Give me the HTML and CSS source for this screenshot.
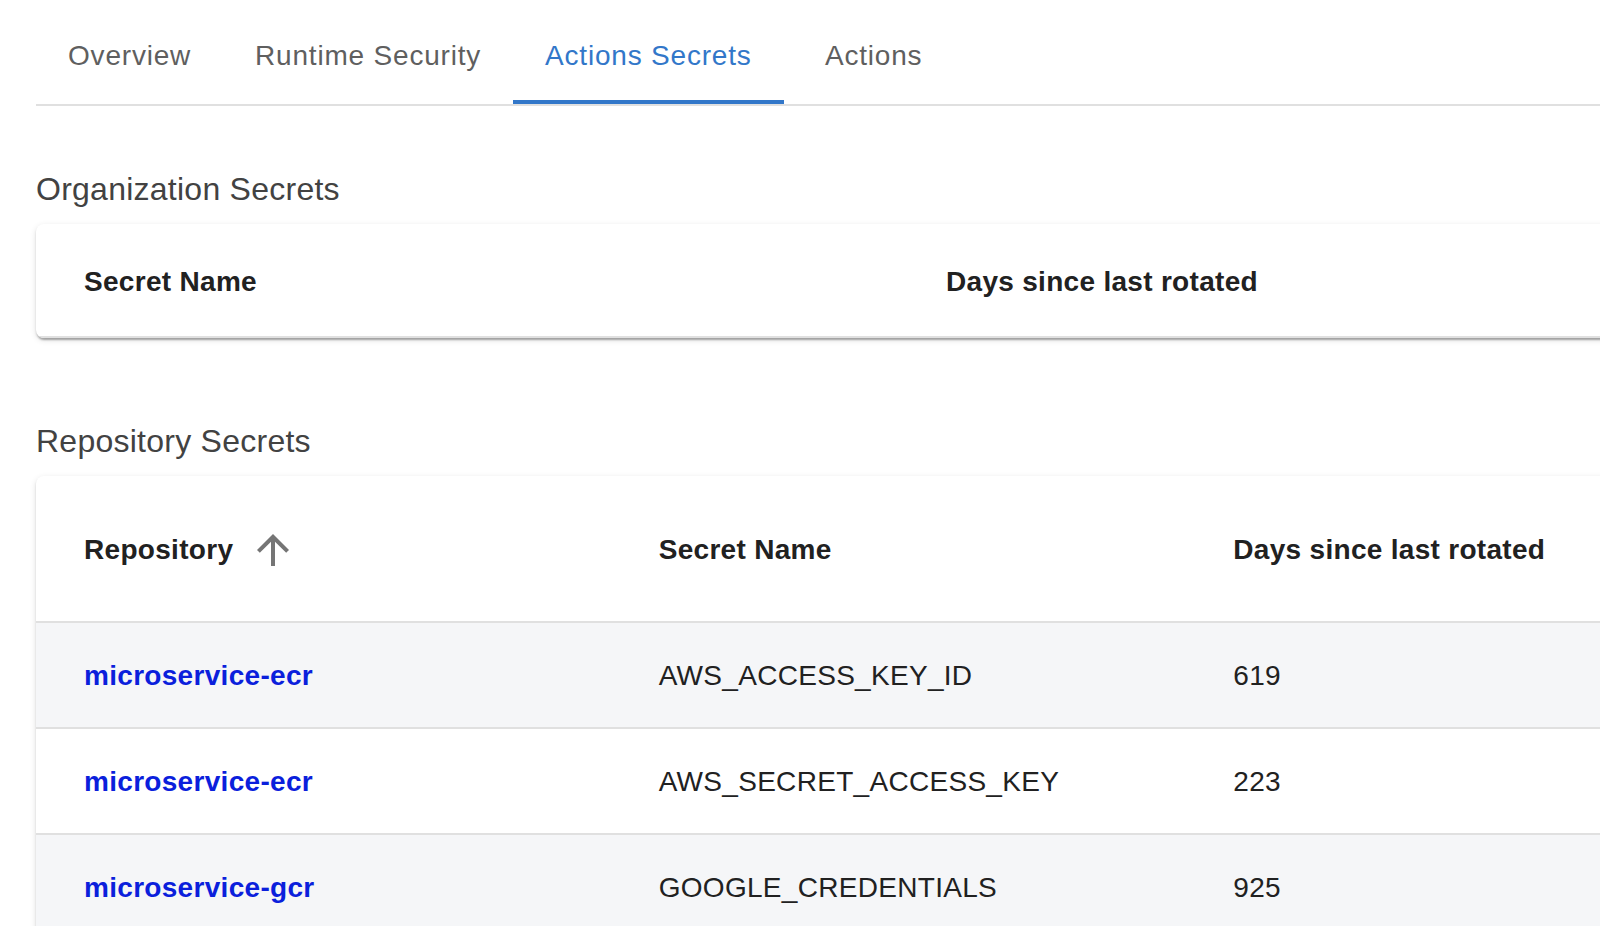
FILE: index.html
```html
<!DOCTYPE html>
<html lang="en">
<head>
<meta charset="utf-8">
<title>Actions Secrets</title>
<link rel="stylesheet" href="styles.css">
</head>
<body>
<div class="page">
  <nav class="tabs">
    <div class="tab">Overview</div>
    <div class="tab">Runtime Security</div>
    <div class="tab active">Actions Secrets</div>
    <div class="tab">Actions</div>
  </nav>

  <h2 class="section-title first">Organization Secrets</h2>
  <div class="paper">
    <div class="table cols-2">
      <div class="cell head org-head">Secret Name</div>
      <div class="cell head org-head">Days since last rotated</div>
    </div>
  </div>

  <h2 class="section-title">Repository Secrets</h2>
  <div class="paper">
    <div class="table cols-3">
      <div class="cell head repo-head">Repository
        <svg class="sort-icon" viewBox="0 0 24 24" aria-hidden="true"><path d="M4 12l1.41 1.41L11 7.83V20h2V7.83l5.58 5.59L20 12l-8-8-8 8z"/></svg>
      </div>
      <div class="cell head repo-head">Secret Name</div>
      <div class="cell head repo-head">Days since last rotated</div>

      <div class="cell body striped"><a class="repo-link" href="#">microservice-ecr</a></div>
      <div class="cell body striped">AWS_ACCESS_KEY_ID</div>
      <div class="cell body striped">619</div>

      <div class="cell body"><a class="repo-link" href="#">microservice-ecr</a></div>
      <div class="cell body">AWS_SECRET_ACCESS_KEY</div>
      <div class="cell body">223</div>

      <div class="cell body striped"><a class="repo-link" href="#">microservice-gcr</a></div>
      <div class="cell body striped">GOOGLE_CREDENTIALS</div>
      <div class="cell body striped">925</div>
    </div>
  </div>
</div>
</body>
</html>
```

FILE: styles.css
```css
html, body {
  margin: 0;
  padding: 0;
  background: #ffffff;
  overflow: hidden;
}

body {
  font-family: "Liberation Sans", Arial, Helvetica, sans-serif;
  color: #212121;
}

.page {
  padding: 8px 0 0 36px;
}

.tabs {
  display: flex;
  border-bottom: 2px solid #e0e0e0;
}

.tab {
  position: relative;
  min-width: 180px;
  height: 96px;
  padding: 0 32px;
  box-sizing: border-box;
  display: flex;
  align-items: center;
  justify-content: center;
  font-size: 28px;
  letter-spacing: 0.8px;
  color: #5f5f5f;
  white-space: nowrap;
}

.tab.active {
  color: #3277c9;
}

.tab.active::after {
  content: "";
  position: absolute;
  left: 0;
  right: 0;
  bottom: 0;
  height: 4px;
  background: #3277c9;
}

.section-title {
  margin: 84px 0 16px;
  font-size: 32px;
  line-height: 38px;
  font-weight: 400;
  letter-spacing: 0.25px;
  color: #424242;
}

.section-title.first {
  margin-top: 64px;
}

.paper {
  width: 1724px;
  background: #ffffff;
  border-radius: 8px;
  overflow: hidden;
  box-shadow: 0 4px 2px -2px rgba(0, 0, 0, 0.2),
              0 2px 2px 0 rgba(0, 0, 0, 0.14),
              0 2px 6px 0 rgba(0, 0, 0, 0.12);
}

.table {
  display: grid;
}

.cols-2 {
  grid-template-columns: 1fr 1fr;
}

.cols-3 {
  grid-template-columns: 1fr 1fr 1fr;
}

.cell {
  display: flex;
  align-items: center;
  padding: 0 48px;
  font-size: 28px;
  letter-spacing: 0.3px;
  border-bottom: 2px solid #e0e0e0;
  box-sizing: border-box;
}

.head {
  font-weight: 700;
  color: #212121;
}

.org-head {
  height: 114px;
  padding-top: 4px;
}

.repo-head {
  height: 147px;
  padding-top: 2px;
}

.body {
  height: 106px;
  padding-top: 2px;
  color: #212121;
}

.striped {
  background: #f5f6f8;
}

.repo-link {
  color: #0b1fdc;
  font-weight: 700;
  text-decoration: none;
}

.sort-icon {
  width: 48px;
  height: 48px;
  margin-left: 16px;
  fill: #757575;
  flex: none;
}
```
